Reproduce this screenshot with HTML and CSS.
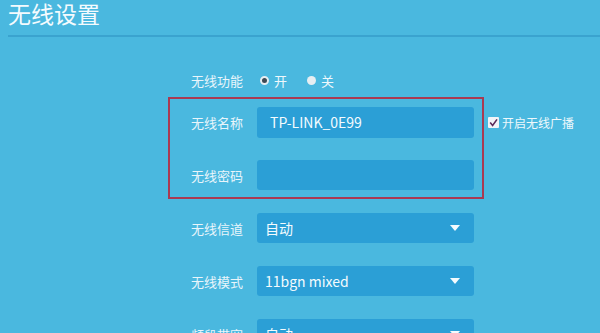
FILE: index.html
```html
<!DOCTYPE html>
<html lang="zh-CN">
<head>
<meta charset="utf-8">
<title>无线设置</title>
<link rel="stylesheet" href="styles.css">
</head>
<body>
<div class="header"><h1 class="title">无线设置</h1></div>
<div class="form">
  <div class="row radio-row">
    <span class="label">无线功能</span>
    <label class="radio"><span class="dot on"></span>开</label>
    <label class="radio"><span class="dot"></span>关</label>
  </div>
  <div class="box">
    <div class="row">
      <span class="label">无线名称</span>
      <div class="input">TP-LINK_0E99</div>
      <label class="check"><span class="cbox"><svg width="9" height="9" viewBox="0 0 9 9"><path d="M1.2 4.6 L3.6 7.4 L8 1.4" fill="none" stroke="#5a2a5a" stroke-width="1.6"/></svg></span>开启无线广播</label>
    </div>
    <div class="row row2">
      <span class="label">无线密码</span>
      <div class="input"></div>
    </div>
  </div>
  <div class="row sel-row">
    <span class="label">无线信道</span>
    <div class="select"><span>自动</span><span class="arrow"></span></div>
  </div>
  <div class="row sel-row">
    <span class="label">无线模式</span>
    <div class="select"><span>11bgn mixed</span><span class="arrow"></span></div>
  </div>
  <div class="row sel-row">
    <span class="label">频段带宽</span>
    <div class="select"><span>自动</span><span class="arrow"></span></div>
  </div>
</div>
</body>
</html>
```
FILE: styles.css
```css
html, body {
  margin: 0;
  padding: 0;
  background: #4ab8df;
  font-family: "Noto Sans CJK SC", "Noto Sans", sans-serif;
  color: #fff;
  overflow: hidden;
  height: 333px;
}
.header {
  margin-left: 8px;
  height: 35px;
  border-bottom: 2px solid #3aa3cf;
}
.title {
  margin: 0;
  font-size: 23px;
  font-weight: normal;
  line-height: 26px;
  color: #f4fbfe;
}
.form {
  margin-top: 28px;
  margin-left: 170px;
}
.row {
  display: flex;
  align-items: center;
}
.row > * { flex-shrink: 0; }
.label {
  width: 73px;
  text-align: right;
  font-size: 13px;
  color: #e8f5fb;
  margin-right: 14px;
}
.radio-row { height: 30px; }
.radio {
  display: flex;
  align-items: center;
  font-size: 13px;
  color: #eef8fc;
  margin-right: 17px;
}
.dot {
  width: 9px;
  height: 9px;
  border-radius: 50%;
  background: #e6eef2;
  margin: 0 5px 0 3px;
  box-sizing: border-box;
}
.dot.on {
  border: 2px solid #e6eef2;
  background: #3d4a55;
}
.box {
  margin-top: 2px;
  margin-left: -2px;
  width: 312px;
  border: 2px solid #a93a52;
  padding: 8px 0 7px 0;
}
.box .row + .row { margin-top: 22px; }
.input {
  width: 217px;
  height: 31px;
  background: #2b9fd6;
  border-radius: 3px;
  box-sizing: border-box;
  padding-left: 13px;
  font-size: 14px;
  line-height: 31px;
  color: #f4fbfe;
}
.row2 .input { height: 30px; }
.check {
  display: flex;
  align-items: center;
  margin-left: 14px;
  font-size: 12px;
  color: #eef8fc;
}
.cbox {
  width: 11px;
  height: 11px;
  background: #f2f4f8;
  border-radius: 1px;
  margin-right: 3px;
  display: flex;
  align-items: center;
  justify-content: center;
}
.sel-row { margin-top: 23px; }
.box + .sel-row { margin-top: 14px; }
.select {
  width: 217px;
  height: 30px;
  background: #2b9fd6;
  border-radius: 3px;
  box-sizing: border-box;
  padding: 0 14px 0 8px;
  display: flex;
  align-items: center;
  justify-content: space-between;
  font-size: 14px;
  color: #f4fbfe;
}
.arrow {
  width: 0;
  height: 0;
  border-left: 5px solid transparent;
  border-right: 5px solid transparent;
  border-top: 6px solid #f4fbfe;
}
```
